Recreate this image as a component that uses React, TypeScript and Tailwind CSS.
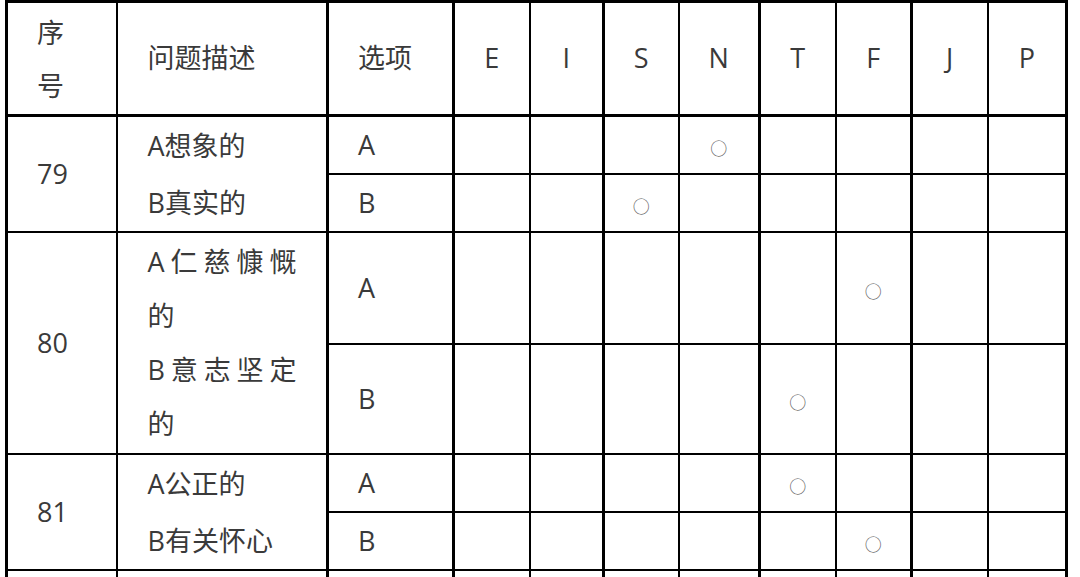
import React from 'react';

const LETTERS = ['E', 'I', 'S', 'N', 'T', 'F', 'J', 'P'];
// thick rule on the right of these letter columns
const THICK = ['I', 'N', 'F', 'P'];

type Row = { opt: 'A' | 'B'; mark: string; h: string };

const GROUPS: { no: string; lines: string[][]; rows: Row[] }[] = [
  {
    no: '79',
    lines: [['A想象的'], ['B真实的']],
    rows: [
      { opt: 'A', mark: 'N', h: 'h-[58px]' },
      { opt: 'B', mark: 'S', h: 'h-[57px]' },
    ],
  },
  {
    no: '80',
    lines: [['A', '仁', '慈', '慷', '慨'], ['的'], ['B', '意', '志', '坚', '定'], ['的']],
    rows: [
      { opt: 'A', mark: 'F', h: 'h-[112px]' },
      { opt: 'B', mark: 'T', h: 'h-[110px]' },
    ],
  },
  {
    no: '81',
    lines: [['A公正的'], ['B有关怀心']],
    rows: [
      { opt: 'A', mark: 'T', h: 'h-[56px]' },
      { opt: 'B', mark: 'F', h: 'h-[56px]' },
    ],
  },
];

const font = "font-['Open_Sans','Noto_Sans_CJK_SC',sans-serif]";

function letterBorder(l: string) {
  return THICK.includes(l) ? 'border-r-[3px]' : 'border-r-2';
}

function Circle() {
  return <span className="text-[17px] text-[#5e5e5e] font-['Noto_Sans_CJK_SC',sans-serif]">○</span>;
}

export default function App() {
  return (
    <div className={`bg-white w-[1080px] h-[577px] overflow-hidden pl-[5px] ${font} text-[#3a3a3a] text-[27px]`}>
      <table className="table-fixed border-collapse border-[3px] border-black w-[1060px]">
        <colgroup>
          <col className="w-[110px]" />
          <col className="w-[211px]" />
          <col className="w-[126px]" />
          <col className="w-[76px]" />
          <col className="w-[74px]" />
          <col className="w-[75px]" />
          <col className="w-[81px]" />
          <col className="w-[76px]" />
          <col className="w-[76px]" />
          <col className="w-[76px]" />
          <col className="w-[79px]" />
        </colgroup>
        <thead>
          <tr className="h-[114px] border-b-[3px] border-black">
            <th className="border-r-2 border-black pl-[29px] text-left font-normal leading-[53px]">
              序<br />号
            </th>
            <th className="border-r-[3px] border-black pl-[30px] text-left font-normal">问题描述</th>
            <th className="border-r-[3px] border-black pl-[29px] text-left font-normal">选项</th>
            {LETTERS.map((l) => (
              <th key={l} className={`${letterBorder(l)} border-black text-center font-normal`}>
                {l}
              </th>
            ))}
          </tr>
        </thead>
        <tbody>
          {GROUPS.map((g) =>
            g.rows.map((r, i) => (
              <tr key={g.no + r.opt} className={`${r.h} border-b-2 border-black`}>
                {i === 0 && (
                  <>
                    <td rowSpan={2} className="border-r-2 border-black pl-[29px]">
                      {g.no}
                    </td>
                    <td rowSpan={2} className="border-r-[3px] border-black pl-[30px]">
                      <div className={g.lines.length > 2 ? 'leading-[54px]' : 'leading-[57px]'}>
                        {g.lines.map((ln, k) =>
                          ln.length > 1 ? (
                            <div key={k} className="flex justify-between w-[149px]">
                              {ln.map((c, j) => (
                                <span key={j}>{c}</span>
                              ))}
                            </div>
                          ) : (
                            <div key={k}>{ln[0]}</div>
                          )
                        )}
                      </div>
                    </td>
                  </>
                )}
                <td className="border-r-[3px] border-black pl-[29px]">{r.opt}</td>
                {LETTERS.map((l) => (
                  <td key={l} className={`${letterBorder(l)} border-black text-center`}>
                    {r.mark === l ? <Circle /> : null}
                  </td>
                ))}
              </tr>
            ))
          )}
          <tr className="h-[60px]">
            <td className="border-r-2 border-black" />
            <td className="border-r-[3px] border-black" />
            <td className="border-r-[3px] border-black" />
            {LETTERS.map((l) => (
              <td key={l} className={`${letterBorder(l)} border-black`} />
            ))}
          </tr>
        </tbody>
      </table>
    </div>
  );
}
